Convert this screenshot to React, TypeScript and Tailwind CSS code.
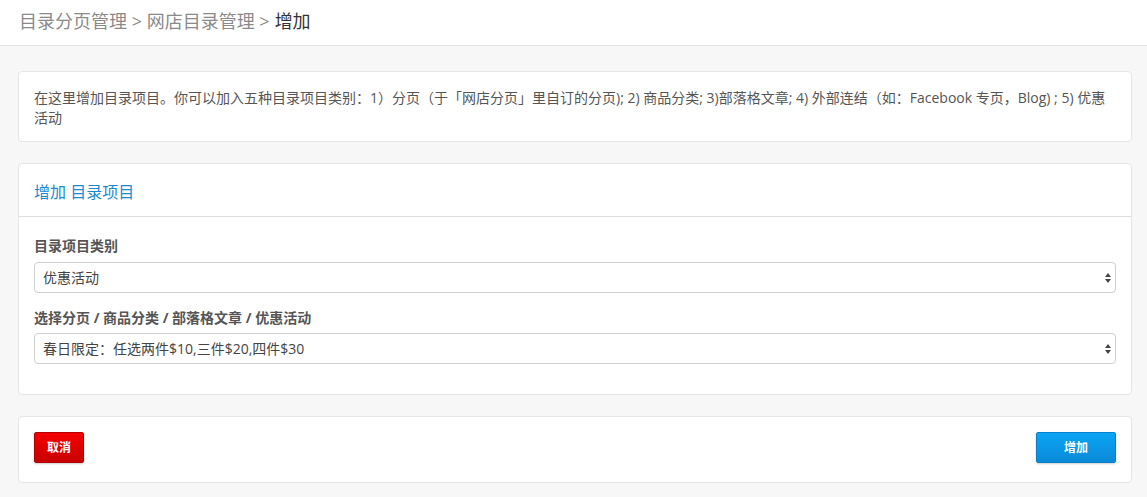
import React from "react";

const font = { fontFamily: '"Open Sans", "Noto Sans CJK SC", sans-serif' };

function Arrows() {
  return (
    <svg width="8" height="12" viewBox="0 0 8 12" className="absolute right-[3px] top-1/2 -translate-y-1/2">
      <path d="M4 1 L7 5 L1 5 Z" fill="#444" />
      <path d="M4 11 L7 7 L1 7 Z" fill="#444" />
    </svg>
  );
}

function Select({ value }: { value: string }) {
  return (
    <div className="relative h-[31px] rounded-[4px] border border-[#cfcfcf] bg-white pl-[8px] flex items-center text-[14px] text-[#444]">
      <span>{value}</span>
      <Arrows />
    </div>
  );
}

export default function App() {
  return (
    <div className="min-h-[497px] bg-[#f7f7f7]" style={font}>
      <div className="h-[46px] bg-white border-b border-[#e2e2e2] flex items-center pl-[19px] pb-[3px] text-[18px] text-[#8a8a8a]">
        <span>目录分页管理 &gt; 网店目录管理 &gt; </span>
        <span className="text-[#333] ml-[5px]">增加</span>
      </div>

      <div className="ml-[18px] mr-[15px] pt-[25px] flex flex-col gap-[21px]">
        <div className="bg-white border border-[#e5e5e5] rounded-[4px] px-[15px] pt-[16px] pb-[13px] text-[14px] leading-[20px] text-[#555]">
          在这里增加目录项目。你可以加入五种目录项目类别：1）分页（于「网店分页」里自订的分页); 2) 商品分类; 3)部落格文章; 4) 外部连结（如：Facebook 专页，Blog) ; 5) 优惠活动
        </div>

        <div className="bg-white border border-[#e5e5e5] rounded-[4px]">
          <div className="h-[53px] border-b border-[#dedede] flex items-center px-[15px] pt-[4px] text-[16px] text-[#1b8ad3]">
            增加 目录项目
          </div>
          <div className="px-[15px] pt-[19px] pb-[30px]">
            <div className="text-[14px] leading-[20px] font-bold text-[#555] mb-[6px]">目录项目类别</div>
            <Select value="优惠活动" />
            <div className="text-[14px] leading-[20px] font-bold text-[#555] mt-[15px] mb-[5px]">选择分页 / 商品分类 / 部落格文章 / 优惠活动</div>
            <Select value="春日限定：任选两件$10,三件$20,四件$30" />
          </div>
        </div>

        <div className="bg-white border border-[#e5e5e5] rounded-[4px] px-[15px] pt-[15px] pb-[19px] flex justify-between">
          <button className="h-[31px] w-[50px] rounded-[2px] border border-[#b30000] bg-gradient-to-b from-[#f50000] to-[#c80000] text-white text-[12px] font-bold shadow-[0_1px_2px_rgba(0,0,0,0.2)]">
            取消
          </button>
          <button className="h-[31px] w-[80px] rounded-[2px] border border-[#0a7fc9] bg-gradient-to-b from-[#0aa5f5] to-[#0a8ad8] text-white text-[12px] font-bold shadow-[0_1px_2px_rgba(0,0,0,0.2)]">
            增加
          </button>
        </div>
      </div>
    </div>
  );
}
